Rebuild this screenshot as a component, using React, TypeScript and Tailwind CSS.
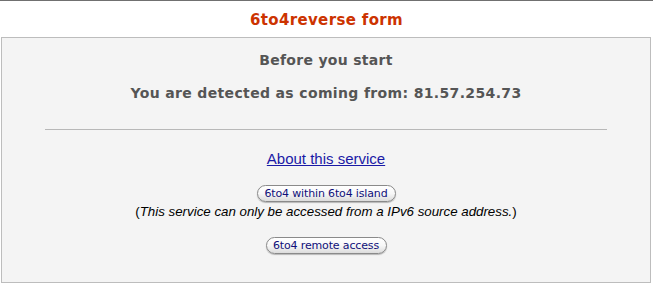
import React from 'react';

const verdana = { fontFamily: '"DejaVu Sans", Verdana, sans-serif' };
const helvetica = { fontFamily: '"Liberation Sans", Arial, sans-serif' };

const PillButton: React.FC<{ label: string; width: string }> = ({ label, width }) => (
  <button
    type="button"
    className={`${width} h-[17px] block rounded-full border border-[#8a8a8a] bg-gradient-to-b from-white via-[#f7f7f7] to-[#dcdcdc] text-[11px] leading-[15px] text-[#10107a] shadow-[0_1px_1px_rgba(0,0,0,0.25)]`}
    style={{ fontFamily: '"DejaVu Sans", "Lucida Grande", sans-serif', letterSpacing: '-0.15px' }}
  >
    {label}
  </button>
);

export default function App() {
  return (
    <div className="w-[653px] h-[285px] bg-white overflow-hidden">
      <div className="h-[1px] bg-[#707070]" />
      <div className="h-[36px] pt-[2px] flex items-center justify-center">
        <h1 className="text-[15px] font-bold tracking-[0.35px] text-[#cc3300]" style={verdana}>
          6to4reverse form
        </h1>
      </div>
      <div className="ml-[1px] w-[650px] h-[246px] border border-[#bdbdbd] bg-[#f4f4f4] flex flex-col items-center">
        <p className="mt-[14px] h-[16px] leading-[16px] text-[14px] font-bold tracking-[0.3px] text-[#555]" style={verdana}>
          Before you start
        </p>
        <p className="mt-[17px] h-[16px] leading-[16px] text-[14px] font-bold tracking-[0.35px] text-[#555]" style={verdana}>
          You are detected as coming from: 81.57.254.73
        </p>
        <div className="mt-[28px] w-[562px] h-[1px] bg-[#b8b8b8] self-start ml-[43px]" />
        <a href="#" className="mt-[20px] h-[17px] leading-[17px] text-[15px] text-[#1a1aa6] underline" style={helvetica}>
          About this service
        </a>
        <div className="mt-[18px] flex">
          <PillButton label="6to4 within 6to4 island" width="w-[139px]" />
        </div>
        <p className="mt-[2px] h-[16px] leading-[16px] text-[13.3px] text-black" style={helvetica}>
          (<i>This service can only be accessed from a IPv6 source address.</i>)
        </p>
        <div className="mt-[17px] flex">
          <PillButton label="6to4 remote access" width="w-[121px]" />
        </div>
      </div>
    </div>
  );
}
